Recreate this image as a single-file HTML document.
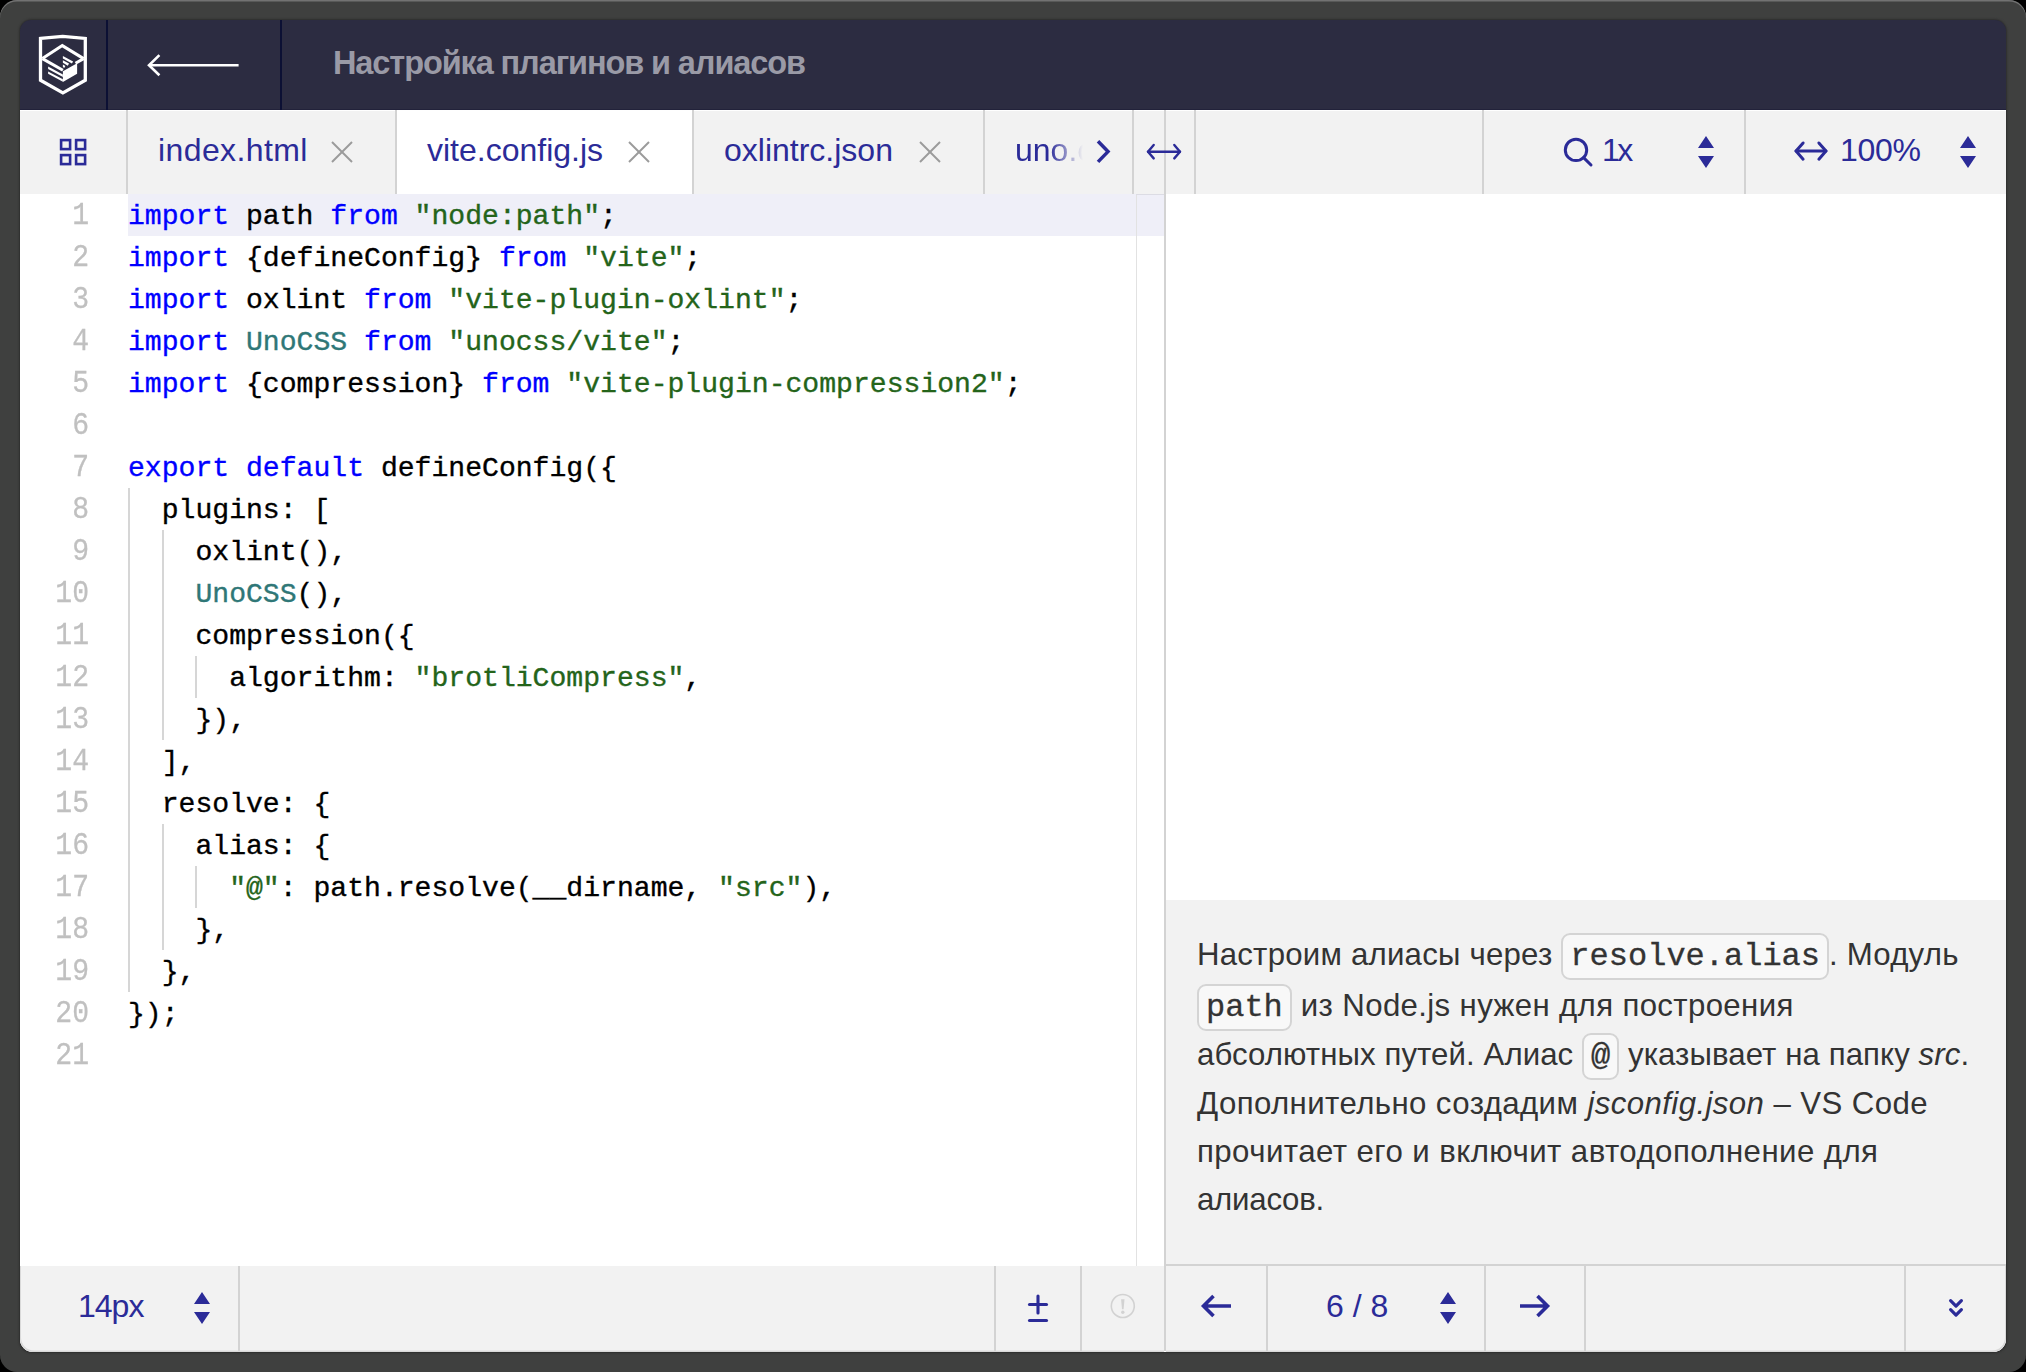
<!DOCTYPE html><html><head><meta charset="utf-8"><style>
html,body{margin:0;padding:0}
body{width:2026px;height:1372px;overflow:hidden;position:relative;background:#000;font-family:"Liberation Sans",sans-serif}
.ab{position:absolute}
.mono{font-family:"Liberation Mono",monospace}
.cl{position:absolute;left:128px;height:42px;line-height:42px;font-family:"Liberation Mono",monospace;font-size:28.1px;white-space:pre;color:#000;-webkit-text-stroke:0.35px currentColor}
.ln{position:absolute;left:20px;width:69px;text-align:right;height:42px;line-height:42px;font-family:"Liberation Mono",monospace;font-size:28.1px;color:#c0c0c0;-webkit-text-stroke:0.25px currentColor;transform:scaleY(1.14);transform-origin:0 30px}
.k{color:#0000ff}.s{color:#24641a}.t{color:#2f7777}
.tab{position:absolute;top:108px;height:84px;line-height:84px;font-size:32px;color:#2b2b98;white-space:pre}
.p{position:absolute;left:1197px;font-size:31.2px;color:#333;white-space:pre;line-height:48px;height:48px}
.code{font-family:"Liberation Mono",monospace;font-size:32px;background:#f8f8f8;border:2px solid #d4d4d4;border-radius:9px;padding:3px 7px;color:#333;letter-spacing:0;-webkit-text-stroke:0.3px currentColor}

</style></head><body>
<div style="position:absolute;left:0px;top:0px;width:2026px;height:1372px;background:#3f403f;border-radius:17px;box-shadow:inset 0 1.5px 0 #727272"></div>
<div class="ab" style="left:0;top:0;width:2026px;height:1372px;">
<div style="position:absolute;left:20px;top:20px;width:1986px;height:1332px;background:#2b2b2b;border-radius:12px;box-shadow:0 0 2px 0.5px #2e2e2e"></div>
<div style="position:absolute;left:20px;top:110px;width:1986px;height:1242px;background:#fff;border-radius:0 0 13px 13px"></div>
<div style="position:absolute;left:20px;top:20px;width:1986px;height:90px;background:#2c2c41;border-radius:11px 11px 0 0"></div>
<div style="position:absolute;left:20px;top:109px;width:1986px;height:1px;background:#22223a"></div>
<div style="position:absolute;left:106px;top:20px;width:2px;height:90px;background:#0c1034"></div>
<div style="position:absolute;left:280px;top:20px;width:2px;height:90px;background:#0c1034"></div>
<svg class="ab" style="left:30px;top:30px" width="70" height="70" viewBox="30 30 70 70">
<g fill="none" stroke="#fff" stroke-width="3.3" stroke-linejoin="miter">
<path d="M40.5 38.4 L62.7 36.3 L85.3 38.4 L85.3 80.2 L62.9 92.9 L40.5 80.2 Z"/>
</g>
<g fill="none" stroke="#fff" stroke-width="3" stroke-linejoin="miter">
<path d="M42.4 58.6 L62.3 45.6 L83.6 58.6"/>
<path d="M42.4 58.6 L62.9 70.2"/>
<path d="M83.6 58.6 L75.5 63.2"/>
</g>
<g fill="#fff">
<path d="M62.9 71.2 L77.1 63.3 L77.1 73.7 L62.9 81.9 Z"/>
<path d="M48.1 66.6 L62.9 74.5 L62.9 76.9 L48.1 69.0 Z"/>
<path d="M48.1 71.4 L62.9 79.3 L62.9 81.7 L48.1 73.8 Z"/>
<path d="M62.9 55.9 L73.1 61.4 L71.9 63.6 L62.9 58.5 Z"/>
<path d="M62.9 60.2 L69.0 63.5 L67.8 65.7 L62.9 62.8 Z"/>
<path d="M62.9 64.5 L65.4 65.9 L64.2 68.1 L62.9 67.1 Z"/>
</g>
</svg>
<svg class="ab" style="left:140px;top:50px" width="110" height="32" viewBox="140 50 110 32">
<g fill="none" stroke="#fff" stroke-width="2.6" stroke-linecap="butt">
<path d="M149 65.2 L238.6 65.2"/><path d="M159.4 55.1 L149 65.2 L159.4 75.3"/></g></svg>
<div class="" style="position:absolute;left:333px;top:19px;white-space:pre;font-size:32.5px;letter-spacing:-1.1px;font-weight:bold;color:#9a9aa6;line-height:88px">Настройка плагинов и алиасов</div>
<div style="position:absolute;left:20px;top:110px;width:1986px;height:84px;background:#f2f2f2"></div>
<div style="position:absolute;left:20px;top:110px;width:1986px;height:1px;background:#fff"></div>
<div style="position:absolute;left:397px;top:110px;width:295px;height:84px;background:#fff"></div>
<div style="position:absolute;left:126px;top:110px;width:2px;height:84px;background:#d3d3d3"></div>
<div style="position:absolute;left:395px;top:110px;width:2px;height:84px;background:#d3d3d3"></div>
<div style="position:absolute;left:692px;top:110px;width:2px;height:84px;background:#d3d3d3"></div>
<div style="position:absolute;left:983px;top:110px;width:2px;height:84px;background:#d3d3d3"></div>
<div style="position:absolute;left:1132px;top:110px;width:2px;height:84px;background:#d3d3d3"></div>
<div style="position:absolute;left:1194px;top:110px;width:2px;height:84px;background:#d3d3d3"></div>
<div style="position:absolute;left:1482px;top:110px;width:2px;height:84px;background:#d3d3d3"></div>
<div style="position:absolute;left:1744px;top:110px;width:2px;height:84px;background:#d3d3d3"></div>
<svg class="ab" style="left:56px;top:135px" width="34" height="34" viewBox="56 135 34 34">
<g fill="none" stroke="#2b2b98" stroke-width="2.6">
<rect x="61.1" y="140.1" width="9" height="9"/><rect x="76.1" y="140.1" width="9" height="9"/>
<rect x="61.1" y="155.1" width="9" height="9"/><rect x="76.1" y="155.1" width="9" height="9"/>
</g></svg>
<div class="tab" style="position:absolute;left:158px;top:108px;white-space:pre;letter-spacing:0.4px">index.html</div>
<div class="tab" style="position:absolute;left:427px;top:108px;white-space:pre;">vite.config.js</div>
<div class="tab" style="position:absolute;left:724px;top:108px;white-space:pre;">oxlintrc.json</div>
<div class="tab" style="left:1015px;width:85px;overflow:hidden;-webkit-mask-image:linear-gradient(90deg,#000 0,#000 34px,rgba(0,0,0,0) 68px)">uno.config.ts</div>
<svg class="ab" style="left:331px;top:141px" width="22" height="22" viewBox="0 0 22 22"><g stroke="#9b9b9b" stroke-width="2"><path d="M1 1 L21 21"/><path d="M21 1 L1 21"/></g></svg>
<svg class="ab" style="left:628px;top:141px" width="22" height="22" viewBox="0 0 22 22"><g stroke="#9b9b9b" stroke-width="2"><path d="M1 1 L21 21"/><path d="M21 1 L1 21"/></g></svg>
<svg class="ab" style="left:919px;top:141px" width="22" height="22" viewBox="0 0 22 22"><g stroke="#9b9b9b" stroke-width="2"><path d="M1 1 L21 21"/><path d="M21 1 L1 21"/></g></svg>
<svg class="ab" style="left:1090px;top:136px" width="26" height="32" viewBox="1090 136 26 32"><path d="M1098 141.3 L1108 151.6 L1098 161.9" fill="none" stroke="#2b2b98" stroke-width="3.5"/></svg>
<div style="position:absolute;left:1164px;top:110px;width:2px;height:84px;background:#d3d3d3"></div>
<svg class="ab" style="left:1143px;top:140.9px" width="42" height="21.4" viewBox="1143 140.9 42 21.4"><g fill="none" stroke="#2b2b98" stroke-width="2.4" stroke-linecap="round" stroke-linejoin="round"><path d="M1148 151.6 L1180 151.6"/><path d="M1153.7 144.9 L1148 151.6 L1153.7 158.29999999999998"/><path d="M1174.3 144.9 L1180 151.6 L1174.3 158.29999999999998"/></g></svg>
<svg class="ab" style="left:1558px;top:132px" width="40" height="40" viewBox="1558 132 40 40"><g fill="none" stroke="#2b2b98" stroke-width="3"><circle cx="1576" cy="149.9" r="10.7"/><path d="M1583.6 157.6 L1591 165" stroke-linecap="round"/></g></svg>
<div class="" style="position:absolute;left:1602px;top:108px;white-space:pre;font-size:32px;letter-spacing:-2.5px;color:#2b2b98;line-height:84px">1x</div>
<svg class="ab" style="left:1698px;top:136px" width="16" height="32" viewBox="0 0 16 32"><path d="M8 0 L16 12 L0 12 Z M0 20 L16 20 L8 32 Z" fill="#2b2b98"/></svg>
<svg class="ab" style="left:1791px;top:139.20000000000002px" width="40" height="24.2" viewBox="1791 139.20000000000002 40 24.2"><g fill="none" stroke="#2b2b98" stroke-width="3" stroke-linecap="round" stroke-linejoin="round"><path d="M1796 151.3 L1826 151.3"/><path d="M1803.1 143.20000000000002 L1796 151.3 L1803.1 159.4"/><path d="M1818.9 143.20000000000002 L1826 151.3 L1818.9 159.4"/></g></svg>
<div class="" style="position:absolute;left:1840px;top:108px;white-space:pre;font-size:32px;letter-spacing:-0.3px;color:#2b2b98;line-height:84px">100%</div>
<svg class="ab" style="left:1960px;top:136px" width="16" height="32" viewBox="0 0 16 32"><path d="M8 0 L16 12 L0 12 Z M0 20 L16 20 L8 32 Z" fill="#2b2b98"/></svg>
<div style="position:absolute;left:128px;top:194px;width:1036px;height:42px;background:#efeff8"></div>
<div style="position:absolute;left:1136px;top:194px;width:1px;height:1072px;background:#e2e2e2"></div>
<div style="position:absolute;left:1136px;top:194px;width:28px;height:1px;background:#dcdce4"></div>
<div style="position:absolute;left:1164px;top:194px;width:2px;height:1157px;background:#d3d3d3"></div>
<div class="ln" style="top:195.5px">1</div>
<div class="cl" style="top:195.5px"><span class="k">import</span> path <span class="k">from</span> <span class="s">"node:path"</span>;</div>
<div class="ln" style="top:237.5px">2</div>
<div class="cl" style="top:237.5px"><span class="k">import</span> {defineConfig} <span class="k">from</span> <span class="s">"vite"</span>;</div>
<div class="ln" style="top:279.5px">3</div>
<div class="cl" style="top:279.5px"><span class="k">import</span> oxlint <span class="k">from</span> <span class="s">"vite-plugin-oxlint"</span>;</div>
<div class="ln" style="top:321.5px">4</div>
<div class="cl" style="top:321.5px"><span class="k">import</span> <span class="t">UnoCSS</span> <span class="k">from</span> <span class="s">"unocss/vite"</span>;</div>
<div class="ln" style="top:363.5px">5</div>
<div class="cl" style="top:363.5px"><span class="k">import</span> {compression} <span class="k">from</span> <span class="s">"vite-plugin-compression2"</span>;</div>
<div class="ln" style="top:405.5px">6</div>
<div class="cl" style="top:405.5px"></div>
<div class="ln" style="top:447.5px">7</div>
<div class="cl" style="top:447.5px"><span class="k">export</span> <span class="k">default</span> defineConfig({</div>
<div class="ln" style="top:489.5px">8</div>
<div class="cl" style="top:489.5px">  plugins: [</div>
<div class="ln" style="top:531.5px">9</div>
<div class="cl" style="top:531.5px">    oxlint(),</div>
<div class="ln" style="top:573.5px">10</div>
<div class="cl" style="top:573.5px">    <span class="t">UnoCSS</span>(),</div>
<div class="ln" style="top:615.5px">11</div>
<div class="cl" style="top:615.5px">    compression({</div>
<div class="ln" style="top:657.5px">12</div>
<div class="cl" style="top:657.5px">      algorithm: <span class="s">"brotliCompress"</span>,</div>
<div class="ln" style="top:699.5px">13</div>
<div class="cl" style="top:699.5px">    }),</div>
<div class="ln" style="top:741.5px">14</div>
<div class="cl" style="top:741.5px">  ],</div>
<div class="ln" style="top:783.5px">15</div>
<div class="cl" style="top:783.5px">  resolve: {</div>
<div class="ln" style="top:825.5px">16</div>
<div class="cl" style="top:825.5px">    alias: {</div>
<div class="ln" style="top:867.5px">17</div>
<div class="cl" style="top:867.5px">      <span class="s">"@"</span>: path.resolve(__dirname, <span class="s">"src"</span>),</div>
<div class="ln" style="top:909.5px">18</div>
<div class="cl" style="top:909.5px">    },</div>
<div class="ln" style="top:951.5px">19</div>
<div class="cl" style="top:951.5px">  },</div>
<div class="ln" style="top:993.5px">20</div>
<div class="cl" style="top:993.5px">});</div>
<div class="ln" style="top:1035.5px">21</div>
<div class="cl" style="top:1035.5px"></div>
<div style="position:absolute;left:128px;top:488px;width:2px;height:504px;background:#d6d6d6"></div>
<div style="position:absolute;left:162px;top:530px;width:2px;height:210px;background:#d6d6d6"></div>
<div style="position:absolute;left:195px;top:656px;width:2px;height:42px;background:#d6d6d6"></div>
<div style="position:absolute;left:162px;top:824px;width:2px;height:126px;background:#d6d6d6"></div>
<div style="position:absolute;left:195px;top:866px;width:2px;height:42px;background:#d6d6d6"></div>
<div style="position:absolute;left:1166px;top:900px;width:840px;height:364px;background:#f2f2f2"></div>
<div style="position:absolute;left:1166px;top:1264px;width:840px;height:2px;background:#d3d3d3"></div>
<div class="p" style="top:931.0px;letter-spacing:0.22px">Настроим алиасы через <span class="code">resolve.alias</span>. Модуль</div>
<div class="p" style="top:982.0px;letter-spacing:0.36px"><span class="code">path</span> из Node.js нужен для построения</div>
<div class="p" style="top:1031.0px;letter-spacing:0.08px">абсолютных путей. Алиас <span class="code">@</span> указывает на папку <i>src</i>.</div>
<div class="p" style="top:1079.5px;letter-spacing:0.41px">Дополнительно создадим <i>jsconfig.json</i> – VS Code</div>
<div class="p" style="top:1128.0px;letter-spacing:0.44px">прочитает его и включит автодополнение для</div>
<div class="p" style="top:1176.0px;letter-spacing:-0.23px">алиасов.</div>
<div style="position:absolute;left:20px;top:1266px;width:1144px;height:86px;background:#f2f2f2;border-radius:0 0 0 13px;box-shadow:inset 1px -1.5px 0 #d9d9d9"></div>
<div style="position:absolute;left:238px;top:1266px;width:2px;height:85px;background:#d3d3d3"></div>
<div style="position:absolute;left:994px;top:1266px;width:2px;height:85px;background:#d3d3d3"></div>
<div style="position:absolute;left:1080px;top:1266px;width:2px;height:85px;background:#d3d3d3"></div>
<div class="" style="position:absolute;left:78px;top:1263.5px;white-space:pre;font-size:32px;letter-spacing:-1.0px;color:#2b2b98;line-height:85px">14px</div>
<svg class="ab" style="left:194px;top:1292px" width="16" height="32" viewBox="0 0 16 32"><path d="M8 0 L16 12 L0 12 Z M0 20 L16 20 L8 32 Z" fill="#2b2b98"/></svg>
<svg class="ab" style="left:1024px;top:1290px" width="28" height="36" viewBox="1024 1290 28 36"><g stroke="#2b2b98" stroke-width="3.1" stroke-linecap="round"><path d="M1029.5 1304.5 L1046.5 1304.5"/><path d="M1038 1296 L1038 1313"/><path d="M1029.5 1320.5 L1046.5 1320.5"/></g></svg>
<svg class="ab" style="left:1108px;top:1291px" width="30" height="30" viewBox="1108 1291 30 30"><circle cx="1122.8" cy="1306" r="11.5" fill="none" stroke="#d2d2d2" stroke-width="1.6"/><path d="M1121.1 1299.3 L1124.5 1299.3 L1123.6 1309.2 L1122 1309.2 Z" fill="#d2d2d2"/><circle cx="1122.8" cy="1312.2" r="1.7" fill="#d2d2d2"/></svg>
<div style="position:absolute;left:1166px;top:1266px;width:840px;height:86px;background:#f2f2f2;border-radius:0 0 13px 0;box-shadow:inset -1px -1.5px 0 #d9d9d9"></div>
<div style="position:absolute;left:1266px;top:1266px;width:2px;height:85px;background:#d3d3d3"></div>
<div style="position:absolute;left:1484px;top:1266px;width:2px;height:85px;background:#d3d3d3"></div>
<div style="position:absolute;left:1584px;top:1266px;width:2px;height:85px;background:#d3d3d3"></div>
<div style="position:absolute;left:1904px;top:1266px;width:2px;height:85px;background:#d3d3d3"></div>
<svg class="ab" style="left:1198px;top:1291.7px" width="37" height="28" viewBox="1198 1291.7 37 28"><path d="M1203.5 1305.7 L1231 1305.7 M1213.5 1295.7 L1203.5 1305.7 L1213.5 1315.7" fill="none" stroke="#2b2b98" stroke-width="3.6" stroke-linejoin="miter"/></svg>
<svg class="ab" style="left:1516px;top:1291.7px" width="37" height="28" viewBox="1516 1291.7 37 28"><path d="M1520 1305.7 L1547.5 1305.7 M1537.5 1295.7 L1547.5 1305.7 L1537.5 1315.7" fill="none" stroke="#2b2b98" stroke-width="3.6" stroke-linejoin="miter"/></svg>
<div class="" style="position:absolute;left:1326px;top:1263.5px;white-space:pre;font-size:32px;letter-spacing:0px;color:#2b2b98;line-height:85px">6 / 8</div>
<svg class="ab" style="left:1440px;top:1292px" width="16" height="32" viewBox="0 0 16 32"><path d="M8 0 L16 12 L0 12 Z M0 20 L16 20 L8 32 Z" fill="#2b2b98"/></svg>
<svg class="ab" style="left:1944px;top:1294px" width="24" height="28" viewBox="1944 1294 24 28"><g fill="none" stroke="#2b2b98" stroke-width="3.2" stroke-linecap="round" stroke-linejoin="round"><path d="M1950.6 1300.7 L1956 1306.1 L1961.4 1300.7"/><path d="M1950.6 1309.7 L1956 1315.1 L1961.4 1309.7"/></g></svg>
</div>
</body></html>
